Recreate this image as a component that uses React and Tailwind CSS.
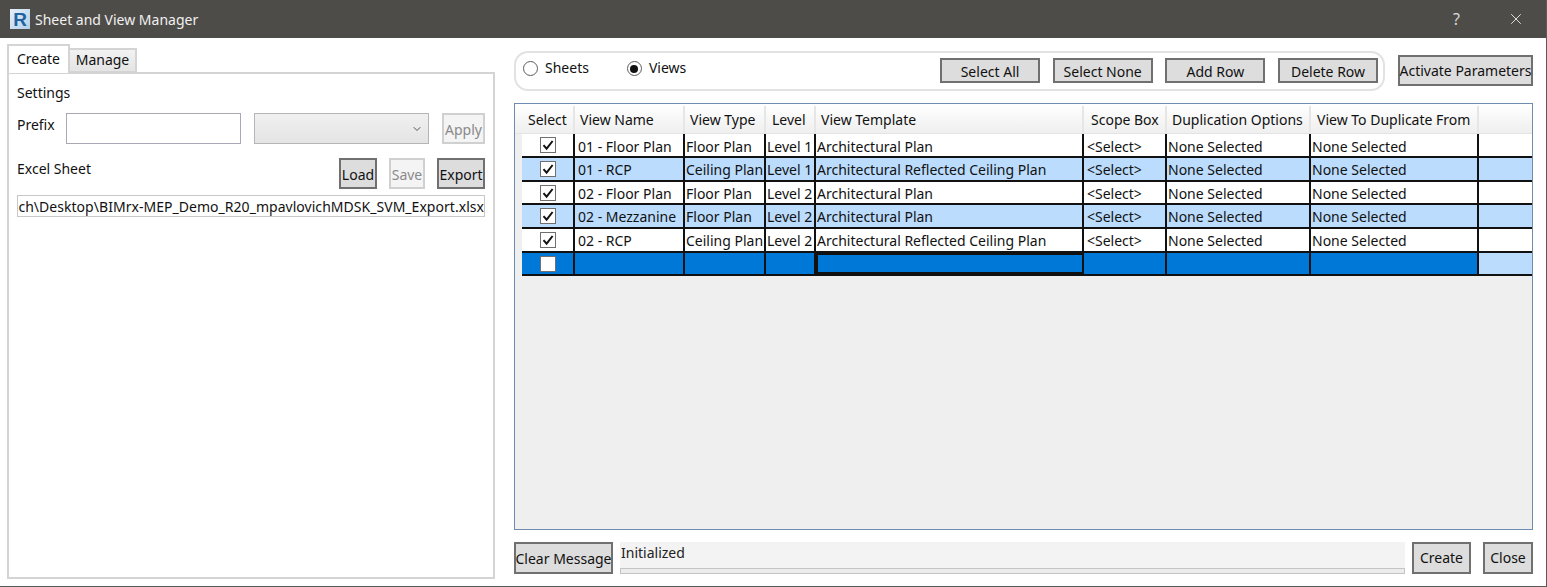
import React from 'react';
import { X, ChevronDown } from 'lucide-react';

const columns = [
  { label: 'Select', w: 'w-[53px]', pad: 'pl-[6px]' },
  { label: 'View Name', w: 'w-[110px]', pad: 'pl-[5px]' },
  { label: 'View Type', w: 'w-[81px]', pad: 'pl-[5px]' },
  { label: 'Level', w: 'w-[50px]', pad: 'pl-[6px]' },
  { label: 'View Template', w: 'w-[268px]', pad: 'pl-[5px]' },
  { label: 'Scope Box', w: 'w-[83px]', pad: 'pl-[7px]' },
  { label: 'Duplication Options', w: 'w-[144px]', pad: 'pl-[5px]' },
  { label: 'View To Duplicate From', w: 'w-[168px]', pad: 'pl-[6px]' },
];

const rows = [
  { name: '01 - Floor Plan', type: 'Floor Plan', level: 'Level 1', template: 'Architectural Plan', h: 'h-[24px]', nudge: '' },
  { name: '01 - RCP', type: 'Ceiling Plan', level: 'Level 1', template: 'Architectural Reflected Ceiling Plan', h: 'h-[24px]', alt: true, nudge: '-translate-y-[1px]' },
  { name: '02 - Floor Plan', type: 'Floor Plan', level: 'Level 2', template: 'Architectural Plan', h: 'h-[23px]', nudge: '' },
  { name: '02 - Mezzanine', type: 'Floor Plan', level: 'Level 2', template: 'Architectural Plan', h: 'h-[24px]', alt: true, nudge: '-translate-y-[1px]' },
  { name: '02 - RCP', type: 'Ceiling Plan', level: 'Level 2', template: 'Architectural Reflected Ceiling Plan', h: 'h-[24px]', nudge: '-translate-y-[1px]' },
];

function Btn({ children, className = '', disabled }) {
  return (
    <button
      className={`flex items-center justify-center border-2 whitespace-nowrap ${
        disabled
          ? 'border-[#d0d0d0] bg-[#f4f4f4] text-[#8a8a8a]'
          : 'border-[#707070] bg-[#dddddd] text-[#111]'
      } ${className}`}
    >
      {children}
    </button>
  );
}

function CheckBox({ checked }) {
  return (
    <div className="w-[16px] h-[16px] -ml-[1px] border border-[#6f6f6f] bg-white flex items-center justify-center">
      {checked && (
        <svg width="14" height="14" viewBox="0 0 14 14" fill="none">
          <path d="M2.5 7.2 L5.6 10.6 L11.6 3" stroke="#111" strokeWidth="2" />
        </svg>
      )}
    </div>
  );
}

function Radio({ checked, label, className = '' }) {
  return (
    <div className={`flex items-center gap-[7px] ${className}`}>
      <div className="w-[15px] h-[15px] rounded-full border border-[#5c5c5c] bg-white flex items-center justify-center">
        {checked && <div className="w-[8px] h-[8px] rounded-full bg-[#111]" />}
      </div>
      <span className="-translate-y-[1px]">{label}</span>
    </div>
  );
}

function Cell({ w, children, className = '' }) {
  return (
    <div className={`${w} shrink-0 h-full border-r-2 border-[#111] flex items-center pl-[1px] overflow-hidden whitespace-nowrap ${className}`}>
      {children}
    </div>
  );
}

export default function App() {
  return (
    <div className="w-[1547px] h-[587px] bg-white flex flex-col overflow-hidden border-b border-r border-[#5a5a5a] text-[14px] text-[#111] font-['Noto_Sans','Open_Sans',sans-serif]">
      {/* Title bar */}
      <div className="h-[38px] shrink-0 bg-[#4e4c49] flex items-center pl-[10px] text-white">
        <div className="w-[20px] h-[20px] bg-gradient-to-br from-[#e4eff9] to-[#b4d0ea] flex items-center justify-center text-[#22629e] font-bold text-[19px] leading-none font-['Liberation_Sans',sans-serif]">
          R
        </div>
        <span className="ml-[5px] text-[#f0f0f0]">Sheet and View Manager</span>
        <span className="ml-auto text-[#d8d8d8] text-[16px]">?</span>
        <X size={18} strokeWidth={1.2} className="ml-[47px] mr-[21px] text-[#eeeeee]" />
      </div>

      <div className="flex-1 flex pl-[7px] pr-[13px] min-h-0">
        {/* Left panel */}
        <div className="w-[488px] shrink-0 flex flex-col pt-[6px] pb-[7px]">
          <div className="flex items-end h-[29px] relative z-10 -mb-[1px]">
            <div className="w-[63px] h-[29px] pb-[2px] border-2 border-b-0 border-[#d4d4d4] bg-white flex items-center justify-center">Create</div>
            <div className="w-[67px] h-[25px] pb-[2px] border-2 border-l-0 border-[#d4d4d4] bg-gradient-to-b from-[#f2f2f2] to-[#e4e4e4] flex items-center justify-center">Manage</div>
          </div>
          <div className="flex-1 border-2 border-[#d4d4d4] px-[8px] pt-[8px] flex flex-col">
            <div className="h-[22px] leading-[22px]">Settings</div>
            <div className="flex mt-[9px] h-[31px]">
              <span className="w-[49px] pt-[1px]">Prefix</span>
              <div className="w-[175px] border border-[#a9a9b5]" />
              <div className="w-[175px] ml-[13px] border border-[#b5b5b5] bg-gradient-to-b from-[#f0f0f0] to-[#e4e4e4] flex items-center justify-end pr-[5px]">
                <ChevronDown size={12} className="text-[#555]" />
              </div>
              <Btn disabled className="w-[43px] ml-[13px] pt-[2px]">Apply</Btn>
            </div>
            <div className="flex mt-[14px] h-[31px]">
              <span className="flex-1">Excel Sheet</span>
              <Btn className="w-[38px] pt-[2px]">Load</Btn>
              <Btn disabled className="w-[36px] ml-[12px] pt-[2px]">Save</Btn>
              <Btn className="w-[48px] ml-[12px] pt-[2px]">Export</Btn>
            </div>
            <div className="mt-[6px] h-[22px] border border-[#c8c8c8] overflow-hidden whitespace-nowrap flex items-center justify-end tracking-[0.035px]">
              ch\Desktop\BIMrx-MEP_Demo_R20_mpavlovichMDSK_SVM_Export.xlsx
            </div>
          </div>
        </div>

        {/* Right panel */}
        <div className="flex-1 ml-[19px] flex flex-col min-w-0">
          <div className="flex items-start pt-[13px] h-[65px] shrink-0">
            <div className="w-[871px] h-[40px] border-2 border-[#e2e2e2] rounded-[14px] flex items-start pl-[7px] pr-[5px]">
              <Radio label="Sheets" className="mt-[5px]" />
              <Radio checked label="Views" className="ml-[38px] mt-[5px]" />
              <div className="ml-auto flex gap-[12.67px] mt-[5px]">
                <Btn className="w-[100px] h-[25px] pt-[2px]">Select All</Btn>
                <Btn className="w-[100px] h-[25px] pt-[2px]">Select None</Btn>
                <Btn className="w-[100px] h-[25px] pt-[2px]">Add Row</Btn>
                <Btn className="w-[100px] h-[25px] pt-[2px]">Delete Row</Btn>
              </div>
            </div>
            <Btn className="w-[135px] h-[31px] ml-[13px] mt-[4px]">Activate Parameters</Btn>
          </div>

          {/* Grid */}
          <div className="h-[427px] shrink-0 border border-[#6d8cb0] bg-[#efefef] flex flex-col pl-[7px] overflow-hidden">
            <div className="h-[30px] shrink-0 flex pt-[2px] bg-gradient-to-b from-white via-[#f7f7f7] to-[#efefef] -ml-[7px] pl-[7px] border-b border-[#e4e4e4]">
              {columns.map(c => (
                <div key={c.label} className={`${c.w} ${c.pad} shrink-0 h-full border-r-2 border-[#e6e6e6] flex items-center whitespace-nowrap`}>
                  {c.label}
                </div>
              ))}
            </div>
            {rows.map(r => (
              <div key={r.name} className={`${r.h} shrink-0 flex border-b-2 border-[#111] ${r.alt ? 'bg-[#bbdcfd]' : 'bg-white'}`}>
                <Cell w="w-[53px]" className="justify-center pl-0"><CheckBox checked /></Cell>
                <Cell w="w-[110px]" className="pl-[3px] pt-[2px]"><span className={r.nudge}>{r.name}</span></Cell>
                <Cell w="w-[81px]" className="pt-[2px]"><span className={r.nudge}>{r.type}</span></Cell>
                <Cell w="w-[50px]" className="pt-[2px]"><span className={r.nudge}>{r.level}</span></Cell>
                <Cell w="w-[268px]" className="pt-[2px]"><span className={r.nudge}>{r.template}</span></Cell>
                <Cell w="w-[83px]" className="pl-[3px] pt-[2px]"><span className={r.nudge}>&lt;Select&gt;</span></Cell>
                <Cell w="w-[144px]" className="pt-[2px]"><span className={r.nudge}>None Selected</span></Cell>
                <Cell w="w-[168px]" className="pt-[2px]"><span className={r.nudge}>None Selected</span></Cell>
              </div>
            ))}
            {/* Selected new row */}
            <div className="h-[23px] shrink-0 flex border-b-2 border-[#111] bg-[#bbdcfd]">
              <Cell w="w-[53px]" className="justify-center pl-0 bg-[#0078d7]"><CheckBox /></Cell>
              <Cell w="w-[110px]" className="bg-[#0078d7]" />
              <Cell w="w-[81px]" className="bg-[#0078d7]" />
              <Cell w="w-[50px]" className="bg-[#0078d7]" />
              <Cell w="w-[268px]" className="bg-[#0078d7] border-2 border-[#111]" />
              <Cell w="w-[83px]" className="bg-[#0078d7]" />
              <Cell w="w-[144px]" className="bg-[#0078d7]" />
              <Cell w="w-[168px]" className="bg-[#0078d7]" />
            </div>
          </div>

          {/* Footer */}
          <div className="flex mt-[12px] h-[32px]">
            <Btn className="w-[99px]">Clear Message</Btn>
            <div className="flex-1 ml-[7px] bg-[#f3f3f3] flex flex-col justify-between">
              <span className="leading-[21px] pl-[1px] text-[#222]">Initialized</span>
              <div className="h-[6px] border border-[#c4c4c4] bg-[#ececec]" />
            </div>
            <Btn className="w-[59px] ml-[7px] pb-[2px]">Create</Btn>
            <Btn className="w-[50px] ml-[12px] pb-[2px]">Close</Btn>
          </div>
        </div>
      </div>
    </div>
  );
}
